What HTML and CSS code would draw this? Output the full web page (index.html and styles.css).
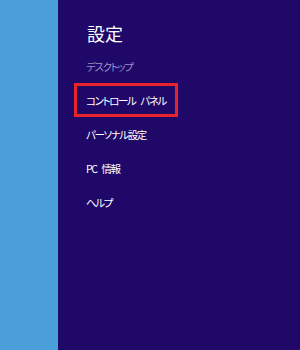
FILE: index.html
```html
<!DOCTYPE html>
<html lang="ja">
<head>
    <meta charset="UTF-8">
    <title>設定</title>
    <link rel="stylesheet" href="styles.css">
</head>
<body>

<div class="screen">
    <div class="side"></div>

    <div class="charm">
        <div class="charm-title">設定</div>
        <div class="menu">
            <div class="item dim">デスクトップ</div>
            <div class="item selected">コントロール パネル</div>
            <div class="item">パーソナル設定</div>
            <div class="item">PC 情報</div>
            <div class="item">ヘルプ</div>
        </div>
    </div>
</div>

</body>
</html>
```

FILE: styles.css
```css
body {
    margin: 0;
    font-family: "Noto Sans CJK JP", "Noto Sans", sans-serif;
    font-feature-settings: "palt";
}

.screen {
    display: flex;
    width: 300px;
    height: 350px;
}

.side {
    width: 58px;
    background: #4a9fd9;
}

.charm {
    flex: 1;
    background: #1f0868;
    padding-top: 21px;
}

.charm-title {
    color: #ffffff;
    font-size: 18px;
    line-height: 24px;
    padding-left: 29px;
    margin-bottom: 4px;
}

.menu {
    display: flex;
    flex-direction: column;
    align-items: flex-start;
    padding-left: 16px;
}

.item {
    box-sizing: border-box;
    height: 34px;
    display: flex;
    align-items: center;
    color: #ffffff;
    font-size: 10.5px;
    letter-spacing: -1.4px;
    word-spacing: 4px;
    border: 3px solid transparent;
    padding: 0 9px;
}

.item.dim {
    color: #9a90c9;
}

.item.selected {
    border-color: #e8232b;
}
```
